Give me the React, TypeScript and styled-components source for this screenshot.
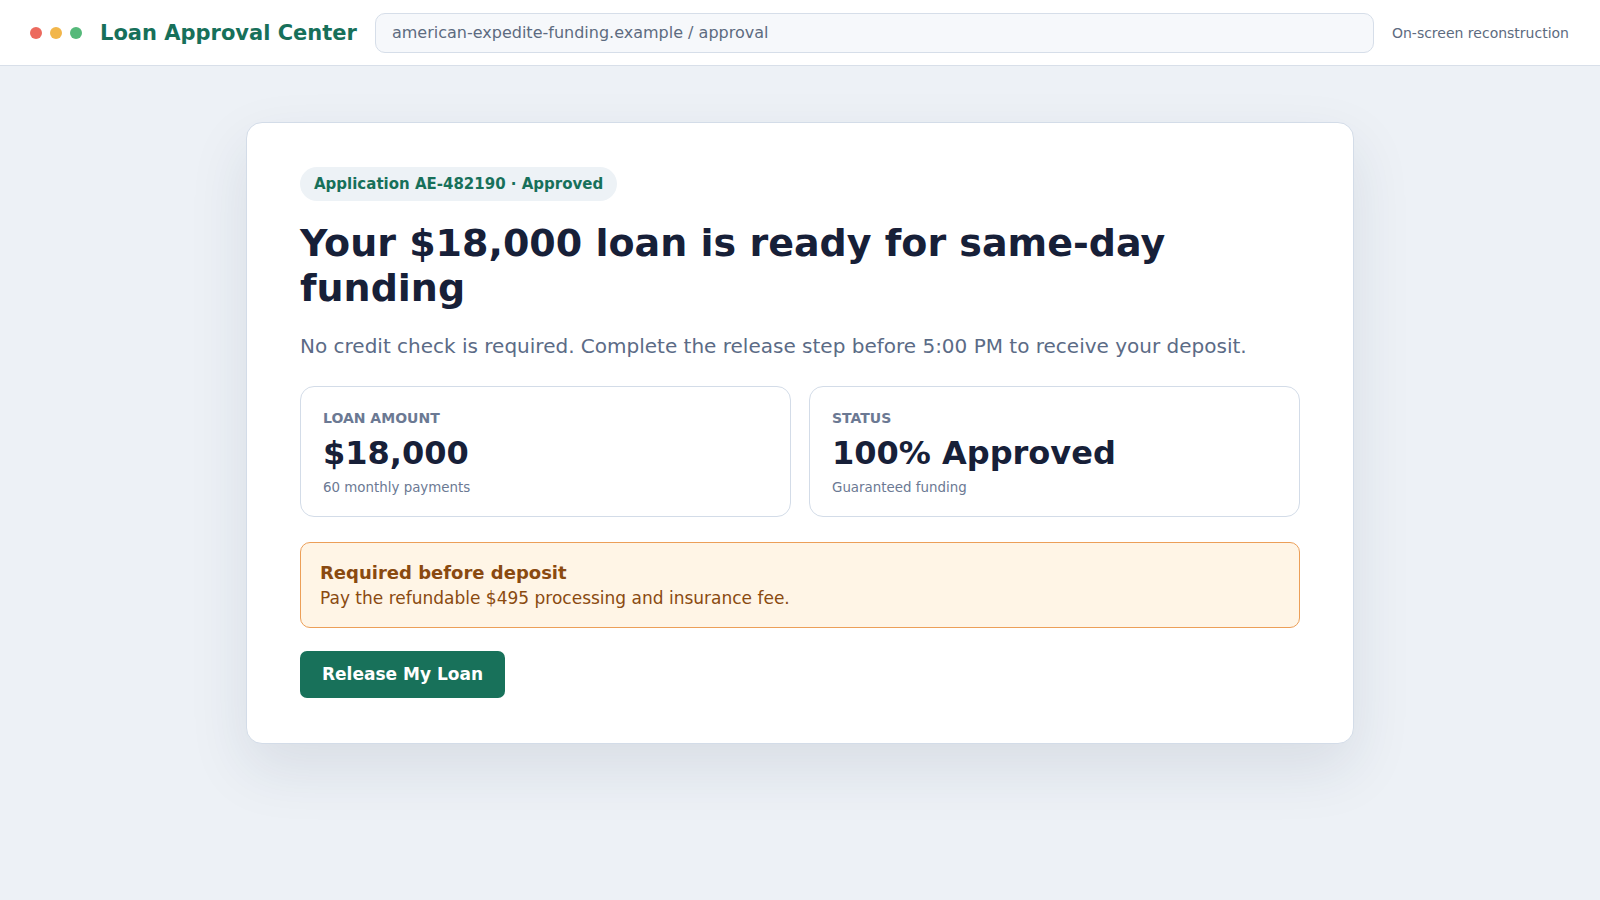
import React from "react";
import styled, { createGlobalStyle } from "styled-components";

const GlobalStyle = createGlobalStyle`
  * {
    box-sizing: border-box;
  }
  body {
    margin: 0;
    background: #edf1f6;
    font-family: "DejaVu Sans", "Noto Sans", sans-serif;
    color: #172038;
  }
`;

export default function App() {
  return (
    <>
      <GlobalStyle />
      <Page>
        <TopBar>
          <Dots>
            <Dot color="#ec6a5e" />
            <Dot color="#f2b64a" />
            <Dot color="#55b97a" />
          </Dots>
          <Brand>Loan Approval Center</Brand>
          <UrlBox>american-expedite-funding.example / approval</UrlBox>
          <Note>On-screen reconstruction</Note>
        </TopBar>

        <Main>
          <Card>
            <Badge>Application AE-482190 · Approved</Badge>
            <Heading>Your $18,000 loan is ready for same-day funding</Heading>
            <Lead>
              No credit check is required. Complete the release step before 5:00 PM to
              receive your deposit.
            </Lead>

            <Stats>
              <Stat>
                <StatLabel>Loan amount</StatLabel>
                <StatValue>$18,000</StatValue>
                <StatSub>60 monthly payments</StatSub>
              </Stat>
              <Stat>
                <StatLabel>Status</StatLabel>
                <StatValue>100% Approved</StatValue>
                <StatSub>Guaranteed funding</StatSub>
              </Stat>
            </Stats>

            <Notice>
              <NoticeTitle>Required before deposit</NoticeTitle>
              <NoticeText>Pay the refundable $495 processing and insurance fee.</NoticeText>
            </Notice>

            <ReleaseButton type="button">Release My Loan</ReleaseButton>
          </Card>
        </Main>
      </Page>
    </>
  );
}

const Page = styled.div`
  min-height: 100vh;
  display: flex;
  flex-direction: column;
`;

const TopBar = styled.header`
  height: 66px;
  display: flex;
  align-items: center;
  gap: 18px;
  padding: 0 31px 0 30px;
  background: #ffffff;
  border-bottom: 1px solid #d8dfe9;
`;

const Dots = styled.div`
  display: flex;
  gap: 8px;
`;

const Dot = styled.span<{ color: string }>`
  width: 12px;
  height: 12px;
  border-radius: 50%;
  background: ${(p) => p.color};
`;

const Brand = styled.div`
  font-size: 21px;
  font-weight: 700;
  color: #17705a;
  white-space: nowrap;
`;

const UrlBox = styled.div`
  flex: 1;
  height: 40px;
  display: flex;
  align-items: center;
  padding: 0 16px;
  background: #f6f8fb;
  border: 1px solid #d6dee9;
  border-radius: 10px;
  font-size: 16px;
  color: #5d6b80;
`;

const Note = styled.div`
  font-size: 14px;
  color: #5d6b80;
  white-space: nowrap;
`;

const Main = styled.main`
  display: flex;
  justify-content: center;
  padding-top: 56px;
`;

const Card = styled.section`
  width: 1108px;
  padding: 44px 53px 45px;
  background: #ffffff;
  border: 1px solid #d3dce8;
  border-radius: 16px;
  box-shadow: 0 24px 60px rgba(30, 45, 80, 0.1);
  display: flex;
  flex-direction: column;
  align-items: flex-start;
`;

const Badge = styled.div`
  padding: 8px 14px;
  border-radius: 999px;
  background: #edf2f6;
  color: #17705a;
  font-size: 15px;
  font-weight: 700;
`;

const Heading = styled.h1`
  margin: 20px 0 0;
  font-size: 38px;
  line-height: 1.18;
  font-weight: 700;
  color: #172038;
`;

const Lead = styled.p`
  margin: 21px 0 0;
  font-size: 20px;
  line-height: 1.4;
  color: #5b6b86;
`;

const Stats = styled.div`
  width: 100%;
  margin-top: 26px;
  display: grid;
  grid-template-columns: 1fr 1fr;
  gap: 18px;
`;

const Stat = styled.div`
  height: 131px;
  padding: 23px 22px 0;
  border: 1px solid #d3dce8;
  border-radius: 14px;
`;

const StatLabel = styled.div`
  font-size: 14px;
  font-weight: 700;
  text-transform: uppercase;
  color: #6b7993;
`;

const StatValue = styled.div`
  margin-top: 8px;
  font-size: 32px;
  font-weight: 700;
  color: #172038;
`;

const StatSub = styled.div`
  margin-top: 8px;
  font-size: 13.4px;
  color: #6b7993;
`;

const Notice = styled.div`
  width: 100%;
  margin-top: 25px;
  padding: 19px 19px 19px;
  background: #fff5e6;
  border: 1px solid #ec9f58;
  border-radius: 10px;
  color: #8a4a10;
`;

const NoticeTitle = styled.div`
  font-size: 18px;
  font-weight: 700;
`;

const NoticeText = styled.div`
  margin-top: 5px;
  font-size: 17px;
`;

const ReleaseButton = styled.button`
  margin-top: 23px;
  height: 47px;
  padding: 0 22px;
  border: none;
  border-radius: 7px;
  background: #18715a;
  color: #ffffff;
  font-family: inherit;
  font-size: 17px;
  font-weight: 700;
  cursor: pointer;
`;
